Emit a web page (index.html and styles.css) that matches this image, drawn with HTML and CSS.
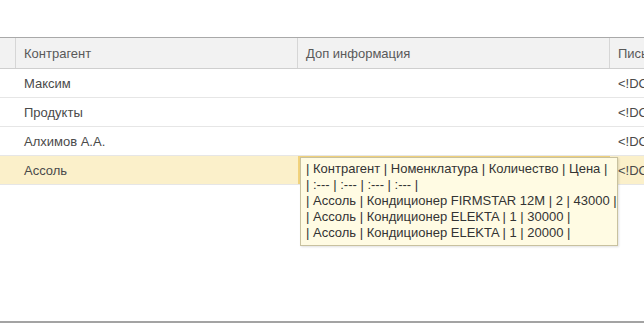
FILE: index.html
```html
<!DOCTYPE html>
<html>
	<head>
		<meta charset="UTF-8">
		<title>Список</title>
		<link rel="stylesheet" href="styles.css">
	</head>
	<body>
		<div class="form">
			<div class="grid">
				<div class="row head">
					<div class="cell mark"></div>
					<div class="cell">Контрагент</div>
					<div class="cell">Доп информация</div>
					<div class="cell">Письмо</div>
				</div>
				<div class="row">
					<div class="cell mark"></div>
					<div class="cell">Максим</div>
					<div class="cell"></div>
					<div class="cell">&lt;!DOCTYPE</div>
				</div>
				<div class="row">
					<div class="cell mark"></div>
					<div class="cell">Продукты</div>
					<div class="cell"></div>
					<div class="cell">&lt;!DOCTYPE</div>
				</div>
				<div class="row">
					<div class="cell mark"></div>
					<div class="cell">Алхимов А.А.</div>
					<div class="cell"></div>
					<div class="cell">&lt;!DOCTYPE</div>
				</div>
				<div class="row current">
					<div class="cell mark"></div>
					<div class="cell">Ассоль</div>
					<div class="cell focus">
						<div class="tooltip">
							<p>| Контрагент | Номенклатура | Количество | Цена |</p>
							<p>| :--- | :--- | :--- | :--- |</p>
							<p>| Ассоль | Кондиционер FIRMSTAR 12M | 2 | 43000 |</p>
							<p>| Ассоль | Кондиционер ELEKTA | 1 | 30000 |</p>
							<p>| Ассоль | Кондиционер ELEKTA | 1 | 20000 |</p>
						</div>
					</div>
					<div class="cell">&lt;!DOCTYPE</div>
				</div>
			</div>
			<div class="bottom"></div>
		</div>
	</body>
</html>
```

FILE: styles.css
```css
html {
	box-sizing: border-box;
	font-family: Arial, "Liberation Sans", sans-serif;
}
*, *:before, *:after {
	box-sizing: inherit;
}

body {
	margin: 0;
	background: #fff;
	overflow: hidden;
}

.form {
	height: 324px;
	padding-top: 37px;
	display: flex;
	flex-direction: column;
}

.grid {
	flex: 1;
	border-top: 1px solid #a9a9a9;
}

.row {
	display: grid;
	grid-template-columns: 16px 282px 312px 1fr;
	height: 29px;
	border-bottom: 1px solid #e6e6e6;
	font-size: 13px;
	color: #4a4a4a;
}

.cell {
	display: flex;
	align-items: center;
	padding-left: 8px;
	white-space: nowrap;
	overflow: hidden;
}

.mark {
	padding: 0;
}

/* шапка таблицы */
.head {
	height: 31px;
	background: #f2f2f2;
	border-bottom: 1px solid #cfcfcf;
	color: #595959;
}

.head .cell {
	border-right: 1px solid #d6d6d6;
}

.head .cell:last-child {
	border-right: none;
}

/* текущая строка */
.current {
	background: #fbf0ca;
}

.focus {
	position: relative;
	overflow: visible;
	border-top: 2px solid #f1d27c;
	border-left: 2px solid #f1d27c;
}

.tooltip {
	position: absolute;
	left: 0;
	top: -1px;
	width: 318px;
	padding: 3px 4px 4px 5px;
	background: #fffbe3;
	border: 1px solid #c8c19f;
	box-shadow: 1px 1px 2px rgba(0, 0, 0, .12);
	color: #333;
	z-index: 2;
}

.tooltip p {
	margin: 0;
	line-height: 16px;
	font-size: 13px;
}

.bottom {
	height: 3px;
	border-top: 2px solid #a3a3a3;
	margin-bottom: 0;
}
```
